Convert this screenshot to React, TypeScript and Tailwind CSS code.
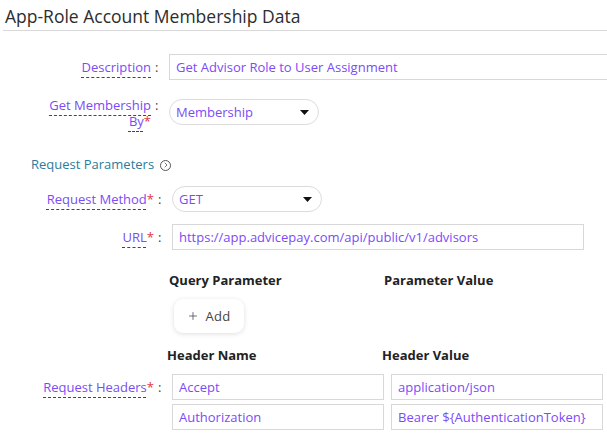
import { ChevronRight, Plus } from 'lucide-react';

const labelCls =
  'underline decoration-dashed decoration-[#3b2fd6] underline-offset-[5px] decoration-1';

function Label({ text, required }: { text: string; required?: boolean }) {
  return (
    <span className="text-[#7b4cf5]">
      <span className={labelCls}>{text}</span>
      {required && <span className="text-[#e0344a]">*</span>}
    </span>
  );
}

function Caret() {
  return (
    <svg width="9" height="5" viewBox="0 0 9 5" className="shrink-0">
      <path d="M0 0h9L4.5 5z" fill="#111" />
    </svg>
  );
}

function Select({ value }: { value: string }) {
  return (
    <div className="w-[150px] h-[26px] rounded-full border border-[#dcdcdc] flex items-center justify-between pl-[6px] pr-[9px] text-[#7b4cf5]">
      <span>{value}</span>
      <Caret />
    </div>
  );
}

function TextBox({ value, className }: { value: string; className: string }) {
  return (
    <div
      className={`h-[26px] border border-[#d8d8d8] flex items-center pl-[6px] text-[#7b4cf5] whitespace-nowrap overflow-hidden ${className}`}
    >
      {value}
    </div>
  );
}

export default function App() {
  return (
    <div
      className="w-[607px] h-[434px] bg-white overflow-hidden text-[13px] leading-[16px]"
      style={{ fontFamily: '"Open Sans", "Liberation Sans", sans-serif' }}
    >
      {/* header */}
      <div className="pl-[5px] pt-[5px] h-[30px] text-[17.5px] leading-[22px] text-[#2d2d2d]">
        App-Role Account Membership Data
      </div>
      <div className="ml-[3px] border-t border-[#d9d9d9]" />

      {/* description */}
      <div className="flex mt-[23px] h-[25px] items-center">
        <div className="w-[151px] text-right">
          <Label text="Description" />
        </div>
        <span className="w-[18px] pl-[4px] text-[#444]">:</span>
        <TextBox value="Get Advisor Role to User Assignment" className="flex-1 border-r-0" />
      </div>

      {/* get membership by */}
      <div className="flex mt-[20px]">
        <div className="w-[151px] flex justify-end -mt-[2px]">
          <div className="w-[108px] text-right">
            <Label text="Get Membership By" required />
          </div>
        </div>
        <span className="w-[18px] pl-[4px] text-[#444] -mt-[2px]">:</span>
        <Select value="Membership" />
      </div>

      {/* request parameters */}
      <div className="flex items-center mt-[27px] pl-[31px] text-[#2b7c9c] gap-[6px]">
        <span>Request Parameters</span>
        <span className="w-[11px] h-[11px] rounded-full border border-[#555] flex items-center justify-center mt-[2px]">
          <ChevronRight size={8} strokeWidth={2.2} color="#444" />
        </span>
      </div>

      {/* request method */}
      <div className="flex mt-[14px] h-[26px] items-center">
        <div className="w-[154px] text-right">
          <Label text="Request Method" required />
        </div>
        <span className="w-[18px] pl-[4px] text-[#444]">:</span>
        <Select value="GET" />
      </div>

      {/* url */}
      <div className="flex mt-[12px] h-[26px] items-center">
        <div className="w-[154px] text-right">
          <Label text="URL" required />
        </div>
        <span className="w-[18px] pl-[4px] text-[#444]">:</span>
        <TextBox value="https://app.advicepay.com/api/public/v1/advisors" className="w-[412px]" />
      </div>

      {/* query parameter */}
      <div className="flex mt-[22px] font-bold text-[#222]">
        <div className="pl-[169px] w-[384px]">Query Parameter</div>
        <div>Parameter Value</div>
      </div>
      <div className="pl-[174px] mt-[11px]">
        <button className="w-[70px] h-[34px] rounded-[9px] bg-white shadow-[0_1px_5px_rgba(0,0,0,0.13)] flex items-center justify-center gap-[6px] text-[#444] tracking-[0.3px]">
          <Plus size={12} strokeWidth={1.5} />
          <span>Add</span>
        </button>
      </div>

      {/* headers */}
      <div className="flex mt-[14px] font-bold text-[#222]">
        <div className="pl-[167px] w-[382px]">Header Name</div>
        <div>Header Value</div>
      </div>
      <div className="flex mt-[11px]">
        <div className="w-[154px] text-right h-[26px] flex items-center justify-end">
          <Label text="Request Headers" required />
        </div>
        <span className="w-[18px] pl-[4px] text-[#444] h-[26px] flex items-center">:</span>
        <div className="flex flex-col gap-[4px]">
          <div className="flex gap-[7px]">
            <TextBox value="Accept" className="w-[212px]" />
            <TextBox value="application/json" className="w-[212px]" />
          </div>
          <div className="flex gap-[7px]">
            <TextBox value="Authorization" className="w-[212px]" />
            <TextBox value="Bearer ${AuthenticationToken}" className="w-[212px]" />
          </div>
        </div>
      </div>
    </div>
  );
}
